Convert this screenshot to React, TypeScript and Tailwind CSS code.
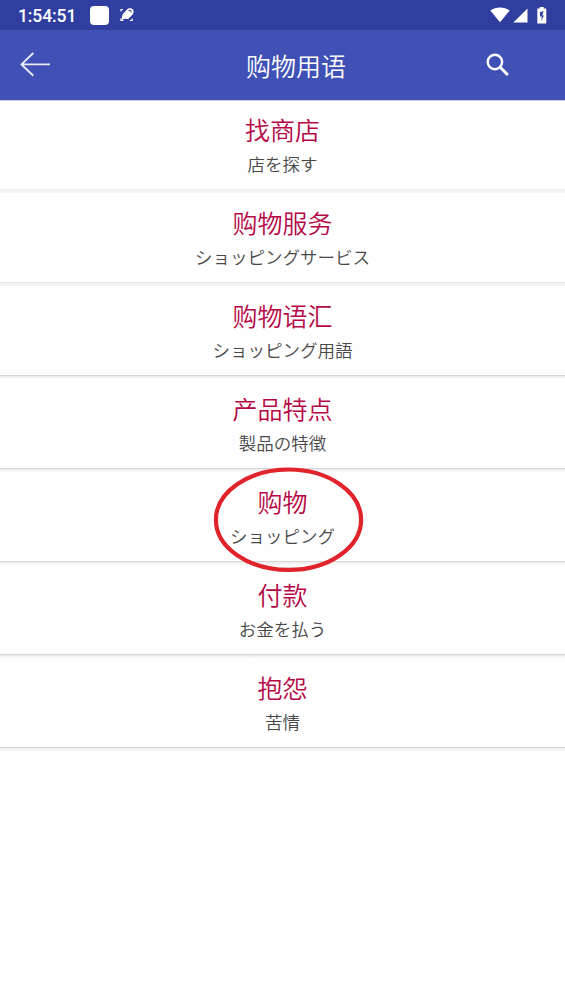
import clsx from 'clsx'

interface Category {
  title: string
  translation: string
  divider: 'soft' | 'medium' | 'strong'
  circled?: boolean
}

const categories: Category[] = [
  { title: '找商店', translation: '店を探す', divider: 'soft' },
  { title: '购物服务', translation: 'ショッピングサービス', divider: 'medium' },
  { title: '购物语汇', translation: 'ショッピング用語', divider: 'strong' },
  { title: '产品特点', translation: '製品の特徴', divider: 'strong' },
  { title: '购物', translation: 'ショッピング', divider: 'strong', circled: true },
  { title: '付款', translation: 'お金を払う', divider: 'strong' },
  { title: '抱怨', translation: '苦情', divider: 'strong' },
]

function StatusBar() {
  return (
    <div className="flex h-[30px] items-center bg-[#303f9f] pl-[18px] pr-[18px] text-white">
      <span className="w-[72px] pt-[3px] font-['Roboto',sans-serif] text-[17.5px] leading-none font-medium tracking-[-0.1px]">
        1:54:51
      </span>
      <div className="h-[19px] w-[19px] rounded-[4px] bg-white" />
      <svg className="ml-[11px]" width="14" height="14" viewBox="0 0 14 14" fill="none">
        <path d="M1 3.6V1.5h2M1 10.2v2.3h2.3M9.8 12.5h2.4v-2" stroke="#fff" strokeWidth="1.2" />
        <path d="M1.4 12 2.6 6.2 6.8 1.8C8.6-.1 11.4 0 12.7 1.3s1.3 3.8-.3 5.4L8.2 11 5 10.8z" fill="#fff" />
        <path d="M8.6 2.9c1.3-1.1 3-.2 2.4 1.5" stroke="#303f9f" strokeWidth="1.1" />
      </svg>
      <svg className="ml-auto" width="20" height="16" viewBox="0 0 20 16">
        <path d="M10 15.2.3 3.5C5.8-.5 14.2-.5 19.7 3.5z" fill="#fff" />
      </svg>
      <svg className="ml-[3px]" width="15" height="15" viewBox="0 0 15 15">
        <path d="M.4 14.5 14.5.6v13.9z" fill="#fff" />
      </svg>
      <svg className="ml-[9px]" width="10" height="17" viewBox="0 0 10 17">
        <path d="M.3 1.6h2.4V0h4v1.6h2.6v14.9h-9z" fill="#fff" />
        <path d="M6.6 4 3 5.2v4.4h2l-1.2 4.6 3.2-5.8H5.3z" fill="#303f9f" />
      </svg>
    </div>
  )
}

function Header() {
  return (
    <header className="relative flex h-[70px] items-center justify-center bg-[#3f51b5] pl-[27px]">
      <button className="absolute top-[22px] left-[20px]" aria-label="返回">
        <svg width="31" height="25" viewBox="0 0 31 25" fill="none" stroke="#e9ebf7" strokeWidth="1.9">
          <path d="M30 12.4H1.5M13.3 1 1.5 12.4l11.8 11.4" />
        </svg>
      </button>
      <h1 className="text-[25px] leading-[36px] font-[350] text-white">购物用语</h1>
      <button className="absolute top-[23px] left-[486px]" aria-label="搜索">
        <svg width="24" height="24" viewBox="0 0 24 24" fill="none" stroke="#fff" strokeWidth="2.4">
          <circle cx="8.9" cy="9" r="7.2" />
          <path d="m14.2 14.3 7.7 7.7" strokeWidth="3" />
        </svg>
      </button>
    </header>
  )
}

function Row({ title, translation, divider, circled }: Category) {
  return (
    <li className="relative flex h-[93px] flex-col">
      <div className="flex flex-1 flex-col items-center pt-[11px]">
        <span className="text-[25px] leading-[36px] font-[350] text-[#b50746]">{title}</span>
        <span className="mt-1 text-[17.5px] leading-[26px] font-[350] text-[#484848]">{translation}</span>
      </div>
      <div
        className={clsx(
          'h-1 border-t',
          divider === 'soft' && 'border-[#eeeeee] bg-[#f4f4f4]',
          divider === 'medium' && 'border-[#e5e5e5] bg-[#f4f4f4]',
          divider === 'strong' && 'border-[#d6d6d6] bg-linear-to-b from-[#ececec] to-[#fafafa]'
        )}
      />
      {circled && (
        <svg className="absolute -top-[6px] left-[213px] z-10" width="151" height="108" viewBox="0 0 151 108">
          <ellipse cx="75.5" cy="53.7" rx="72.6" ry="50.2" fill="none" stroke="#e1232c" strokeWidth="4.2" />
        </svg>
      )}
    </li>
  )
}

export default function App() {
  return (
    <div className="min-h-screen bg-[#fefefe] font-['Noto_Sans_CJK_SC',sans-serif]">
      <StatusBar />
      <Header />
      <ul className="shadow-[inset_0_1px_0_#c9cdec]">
        {categories.map((category) => (
          <Row key={category.title} {...category} />
        ))}
      </ul>
    </div>
  )
}
